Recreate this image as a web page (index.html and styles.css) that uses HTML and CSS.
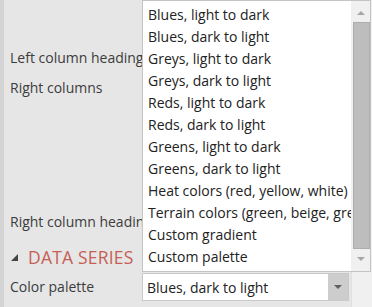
FILE: index.html
```html
<!DOCTYPE html>
<html>
<head>
<meta charset="utf-8">
<link rel="stylesheet" href="styles.css">
</head>
<body>
<div class="app">
  <div class="panel">
    <div class="label first">Left column heading</div>
    <div class="label second">Right columns</div>
    <div class="label third">Right column heading</div>
    <div class="section">
      <span class="tri"></span>
      <span class="section-title">DATA SERIES</span>
    </div>
    <div class="row">
      <div class="label row-label">Color palette</div>
      <div class="select">
        <span class="select-text">Blues, dark to light</span>
        <span class="select-btn"><span class="arrow-down"></span></span>
      </div>
    </div>
  </div>
  <div class="gutter"></div>

  <div class="dropdown">
    <ul class="items">
      <li>Blues, light to dark</li>
      <li>Blues, dark to light</li>
      <li>Greys, light to dark</li>
      <li>Greys, dark to light</li>
      <li>Reds, light to dark</li>
      <li>Reds, dark to light</li>
      <li>Greens, light to dark</li>
      <li>Greens, dark to light</li>
      <li>Heat colors (red, yellow, white)</li>
      <li>Terrain colors (green, beige, grey)</li>
      <li>Custom gradient</li>
      <li>Custom palette</li>
    </ul>
    <div class="scrollbar">
      <span class="sb-arrow up"></span>
      <span class="thumb"></span>
      <span class="sb-arrow down"></span>
    </div>
  </div>
</div>
</body>
</html>
```

FILE: styles.css
```css
* { box-sizing: border-box; }
html, body { margin: 0; padding: 0; }
body {
  width: 372px;
  height: 307px;
  overflow: hidden;
  background: #e6e6e6;
  font-family: "Open Sans", "Noto Sans", sans-serif;
  font-size: 14px;
  color: #3c3c3c;
}
.app {
  position: relative;
  display: flex;
  height: 307px;
}
.panel {
  flex: 1;
  display: flex;
  flex-direction: column;
  border-left: 4px solid #d4d4d4;
  padding-left: 6px;
  padding-top: 48px;
}
.label {
  height: 20px;
  line-height: 20px;
  white-space: nowrap;
}
.second { margin-top: 10px; }
.third { margin-top: 114px; }
.section {
  margin-top: 12px;
  height: 26px;
  display: flex;
  align-items: center;
  gap: 10px;
}
.tri {
  width: 0;
  height: 0;
  margin-left: 1px;
  border-left: 7px solid transparent;
  border-bottom: 7px solid #444;
}
.section-title {
  font-size: 17.5px;
  color: #c55f55;
  letter-spacing: 0.2px;
}
.row {
  margin-top: 3px;
  display: flex;
  align-items: center;
  height: 28px;
}
.row-label { width: 132px; }
.select {
  width: 207px;
  height: 28px;
  background: #fff;
  border: 1px solid #c9c9c9;
  display: flex;
  align-items: center;
  justify-content: space-between;
  color: #222;
}
.select-text { padding-left: 4px; }
.select-btn {
  width: 20px;
  height: 26px;
  background: #cdcdcd;
  display: flex;
  align-items: center;
  justify-content: center;
}
.arrow-down {
  width: 0; height: 0;
  border-left: 4px solid transparent;
  border-right: 4px solid transparent;
  border-top: 4px solid #606060;
}
.gutter {
  width: 21px;
  background: #f0f0f0;
  border-left: 1px solid #e0e0e0;
}
.dropdown {
  position: absolute;
  left: 142px;
  top: 0;
  width: 229px;
  height: 272px;
  background: #fff;
  border: 1px solid #c4c4c4;
  display: flex;
}
.items {
  list-style: none;
  margin: 0;
  padding: 3px 0 0 5px;
  flex: 1;
  overflow: hidden;
  color: #222;
}
.items li {
  height: 22px;
  line-height: 22px;
  white-space: nowrap;
}
.scrollbar {
  width: 19px;
  background: #f0f0f0;
  display: flex;
  flex-direction: column;
  align-items: center;
  padding: 0 1px 0 2px;
}
.sb-arrow {
  width: 0; height: 0;
  border-left: 4px solid transparent;
  border-right: 4px solid transparent;
}
.sb-arrow.up {
  margin-top: 10px;
  border-bottom: 4px solid #a6a6a6;
}
.sb-arrow.down {
  margin-top: 8px;
  border-top: 4px solid #a6a6a6;
}
.thumb {
  margin-top: 7px;
  width: 17px;
  height: 227px;
  background: #bdbdbd;
  border: 1px solid #adadad;
}
```
